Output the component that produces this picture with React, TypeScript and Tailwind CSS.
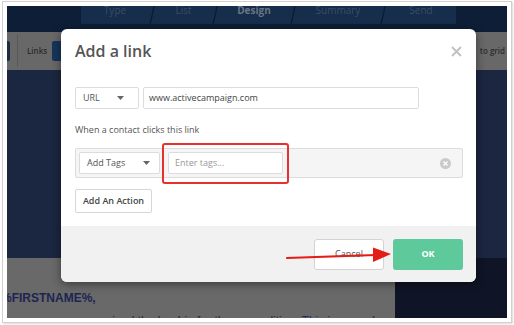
import React from "react";

const ui = { fontFamily: '"Open Sans", "Liberation Sans", sans-serif' };
const serifless = { fontFamily: '"Liberation Sans", Arial, sans-serif' };

function Caret() {
  return (
    <svg width="7" height="4" viewBox="0 0 7 4" className="shrink-0">
      <path d="M0 0 L7 0 L3.5 4 Z" fill="#666" />
    </svg>
  );
}

function TabSep() {
  return (
    <svg width="6" height="18" viewBox="0 0 6 18" className="shrink-0">
      <path d="M5 0 Q3.5 9 1 18" stroke="#0c1a2e" strokeWidth="1.2" fill="none" />
    </svg>
  );
}

function Tab({ label, w, active }: { label: string; w: string; active?: boolean }) {
  return (
    <div className={`${w} h-full flex justify-center items-start`}>
      <span
        className={`mt-[-2px] text-[10px] leading-[12px] ${
          active ? "font-bold text-[#6a7686]" : "text-[#3a4d65]"
        }`}
      >
        {label}
      </span>
    </div>
  );
}

function Background() {
  return (
    <div className="flex flex-col w-full h-full" style={ui}>
      {/* wizard steps */}
      <div className="h-[26px] bg-[#0e1e36] flex pl-[74px] shrink-0">
        <div className="flex h-[18px] w-[375px] bg-[#162d4b]">
          <Tab label="Type" w="w-[68px]" />
          <TabSep />
          <Tab label="List" w="w-[57px]" />
          <TabSep />
          <Tab label="Design" w="w-[72px]" active />
          <TabSep />
          <Tab label="Summary" w="w-[84px]" />
          <TabSep />
          <Tab label="Send" w="w-[70px]" />
        </div>
      </div>

      {/* toolbar */}
      <div className="h-[38px] bg-[#686868] flex items-center shrink-0">
        <div className="w-[3px] h-[20px] bg-[#1c2b43] rounded-r-[2px]" />
        <div className="w-px h-[32px] bg-[#595959] ml-[7px]" />
        <span className="ml-[9px] text-[8px] font-semibold text-[#2c2c2c]">Links</span>
        <div className="ml-[5px] w-[20px] h-[20px] bg-[#17355a] rounded-[2px]" />
        <span className="ml-auto mr-[2px] text-[8px] font-semibold text-[#2c2c2c]">to grid</span>
      </div>

      {/* body */}
      <div className="h-[188px] bg-[#1b2640] shrink-0" />

      <div className="flex flex-1 min-h-0">
        <div className="w-[388px] bg-[#696969] overflow-hidden" style={serifless}>
          <div className="mt-[33px] ml-[-6px] text-[12px] font-bold text-[#1e2452] leading-[14px] whitespace-nowrap">
            %FIRSTNAME%,
          </div>
          <div className="mt-[9px] ml-[82px] text-[12px] text-[#262630] leading-[14px] whitespace-nowrap">
            received the lead-in for the new edition. <span className="text-[#1e2a6a]">This</span> is your chance to see
          </div>
        </div>
        <div className="flex-1 bg-[#0f1426]" />
      </div>
    </div>
  );
}

function Modal() {
  return (
    <div
      className="absolute left-[54px] top-[23px] w-[415px] h-[253px] bg-white rounded-[6px] shadow-[0_2px_10px_rgba(0,0,0,0.45)] flex flex-col overflow-hidden"
      style={ui}
    >
      <div className="h-[44px] px-[14px] flex items-center justify-between shrink-0">
        <span className="text-[16px] font-semibold text-[#555] leading-none">Add a link</span>
        <svg width="11" height="11" viewBox="0 0 11 11">
          <path d="M1 1 L10 10 M10 1 L1 10" stroke="#c0c0c0" strokeWidth="1.8" />
        </svg>
      </div>

      <div className="px-[14px] pt-[14px] flex flex-col items-start shrink-0">
        <div className="flex gap-[4px]">
          <div className="w-[64px] h-[22px] border border-[#dcdcdc] rounded-[2px] flex items-center pl-[7px] pr-[14px] justify-between">
            <span className="text-[9px] text-[#555]">URL</span>
            <Caret />
          </div>
          <div className="w-[276px] h-[22px] border border-[#dcdcdc] rounded-[2px] flex items-center px-[5px]">
            <span className="text-[9px] text-[#444]">www.activecampaign.com</span>
          </div>
        </div>

        <div className="mt-[14px] h-[14px] flex items-center text-[9px] text-[#555]">
          When a contact clicks this link
        </div>

        <div className="mt-[11px] w-[388px] h-[30px] bg-[#f5f5f5] border border-[#dcdcdc] rounded-[2px] flex items-center px-[3px] relative">
          <div className="w-[81px] h-[22px] bg-white border border-[#dcdcdc] rounded-[2px] flex items-center justify-between pl-[7px] pr-[9px]">
            <span className="text-[9px] text-[#555]">Add Tags</span>
            <Caret />
          </div>
          <div className="ml-[8px] w-[115px] h-[22px] bg-white border border-[#dcdcdc] rounded-[2px] flex items-center px-[6px]">
            <span className="text-[9px] text-[#999]">Enter tags...</span>
          </div>
          <div className="ml-auto mr-[8px] w-[11px] h-[11px] rounded-full bg-[#cacaca] flex items-center justify-center">
            <svg width="5" height="5" viewBox="0 0 5 5">
              <path d="M0.5 0.5 L4.5 4.5 M4.5 0.5 L0.5 4.5" stroke="#fff" strokeWidth="1.3" />
            </svg>
          </div>
          {/* red highlight */}
          <div className="absolute left-[86px] top-[-6px] w-[127px] h-[41px] border-2 border-[#e8312c] rounded-[3px]" />
        </div>

        <div className="mt-[11px] w-[77px] h-[24px] border border-[#d6d6d6] rounded-[2px] flex items-center justify-center">
          <span className="text-[9px] font-semibold text-[#444]">Add An Action</span>
        </div>
      </div>

      <div className="mt-auto h-[56px] bg-[#f1f1f1] flex items-center justify-end gap-[9px] pr-[13px] shrink-0">
        <div className="w-[70px] h-[31px] bg-white border border-[#d3d3d3] rounded-[3px] flex items-center justify-center">
          <span className="text-[9px] text-[#555]">Cancel</span>
        </div>
        <div className="w-[70px] h-[31px] bg-[#5ec99b] rounded-[3px] flex items-center justify-center">
          <span className="text-[9px] font-bold text-white">OK</span>
        </div>
      </div>
    </div>
  );
}

export default function App() {
  return (
    <div className="w-[514px] h-[325px] bg-white relative overflow-hidden">
      <div className="ml-[2px] mt-[1px] w-[510px] h-[322px] border border-[#d0d0d0] bg-white p-[4px] shadow-[1px_1px_2px_rgba(0,0,0,0.15)]">
        <div className="w-full h-full relative overflow-hidden">
          <Background />
          <Modal />
        </div>
      </div>

      {/* red arrow */}
      <svg className="absolute left-0 top-0" width="514" height="325" viewBox="0 0 514 325">
        <path d="M287 258 L376 255" stroke="#e51d17" strokeWidth="2.2" strokeLinecap="round" />
        <path d="M373 247.5 L391 254 L373 262 Z" fill="#e51d17" />
      </svg>
    </div>
  );
}
